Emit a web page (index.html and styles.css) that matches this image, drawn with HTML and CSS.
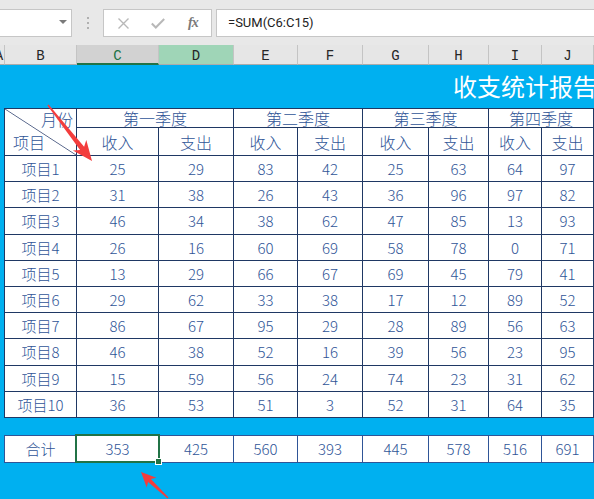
FILE: index.html
```html
<!DOCTYPE html>
<html lang="zh">
<head>
<meta charset="utf-8">
<title>收支统计报告</title>
<link rel="stylesheet" href="styles.css">
</head>
<body>
<div class="app">
  <div class="toolbar">
    <div class="namebox"><span class="caret"></span></div>
    <div class="grip"><i></i><i></i><i></i></div>
    <div class="fxbox">
      <svg class="ic-x" width="11" height="11" viewBox="0 0 11 11"><path d="M0.5 0.5 L10.5 10.5 M10.5 0.5 L0.5 10.5" stroke="#b8b8b8" stroke-width="1.4" fill="none"/></svg>
      <svg class="ic-ok" width="14" height="11" viewBox="0 0 14 11"><path d="M0.8 5.5 L4.8 9.5 L13.2 1" stroke="#b8b8b8" stroke-width="2" fill="none"/></svg>
      <span class="ic-fx">fx</span>
    </div>
    <div class="formula">=SUM(C6:C15)</div>
  </div>
  <div class="colheads">
    <div class="ch cha"><span>A</span></div>
    <div class="ch">B</div>
    <div class="ch chsel">C</div>
    <div class="ch chhi">D</div>
    <div class="ch">E</div>
    <div class="ch">F</div>
    <div class="ch">G</div>
    <div class="ch">H</div>
    <div class="ch">I</div>
    <div class="ch">J</div>
  </div>
  <div class="sheet">
    <div class="title">收支统计报告</div>
    <div class="grid main">
      <div class="cell corner"><span class="yf">月份</span><span class="xm">项目</span></div>
      <div class="cell hd q">第一季度</div>
      <div class="cell hd q">第二季度</div>
      <div class="cell hd q">第三季度</div>
      <div class="cell hd q">第四季度</div>
      <div class="cell hd">收入</div><div class="cell hd">支出</div>
      <div class="cell hd">收入</div><div class="cell hd">支出</div>
      <div class="cell hd">收入</div><div class="cell hd">支出</div>
      <div class="cell hd">收入</div><div class="cell hd">支出</div>

      <div class="cell">项目1</div><div class="cell">25</div><div class="cell">29</div><div class="cell">83</div><div class="cell">42</div><div class="cell">25</div><div class="cell">63</div><div class="cell">64</div><div class="cell">97</div>
      <div class="cell">项目2</div><div class="cell">31</div><div class="cell">38</div><div class="cell">26</div><div class="cell">43</div><div class="cell">36</div><div class="cell">96</div><div class="cell">97</div><div class="cell">82</div>
      <div class="cell">项目3</div><div class="cell">46</div><div class="cell">34</div><div class="cell">38</div><div class="cell">62</div><div class="cell">47</div><div class="cell">85</div><div class="cell">13</div><div class="cell">93</div>
      <div class="cell">项目4</div><div class="cell">26</div><div class="cell">16</div><div class="cell">60</div><div class="cell">69</div><div class="cell">58</div><div class="cell">78</div><div class="cell">0</div><div class="cell">71</div>
      <div class="cell">项目5</div><div class="cell">13</div><div class="cell">29</div><div class="cell">66</div><div class="cell">67</div><div class="cell">69</div><div class="cell">45</div><div class="cell">79</div><div class="cell">41</div>
      <div class="cell">项目6</div><div class="cell">29</div><div class="cell">62</div><div class="cell">33</div><div class="cell">38</div><div class="cell">17</div><div class="cell">12</div><div class="cell">89</div><div class="cell">52</div>
      <div class="cell">项目7</div><div class="cell">86</div><div class="cell">67</div><div class="cell">95</div><div class="cell">29</div><div class="cell">28</div><div class="cell">89</div><div class="cell">56</div><div class="cell">63</div>
      <div class="cell">项目8</div><div class="cell">46</div><div class="cell">38</div><div class="cell">52</div><div class="cell">16</div><div class="cell">39</div><div class="cell">56</div><div class="cell">23</div><div class="cell">95</div>
      <div class="cell">项目9</div><div class="cell">15</div><div class="cell">59</div><div class="cell">56</div><div class="cell">24</div><div class="cell">74</div><div class="cell">23</div><div class="cell">31</div><div class="cell">62</div>
      <div class="cell">项目10</div><div class="cell">36</div><div class="cell">53</div><div class="cell">51</div><div class="cell">3</div><div class="cell">52</div><div class="cell">31</div><div class="cell">64</div><div class="cell">35</div>
    </div>
    <div class="grid total">
      <div class="cell">合计</div>
      <div class="cell active">353<span class="sel"></span><span class="handle"></span></div>
      <div class="cell">425</div><div class="cell">560</div><div class="cell">393</div><div class="cell">445</div><div class="cell">578</div><div class="cell">516</div><div class="cell">691</div>
    </div>
  </div>
  <svg class="arrows" width="594" height="499" viewBox="0 0 594 499">
    <polygon fill="#f33d3d" points="47.4,105.5 80.1,150.0 72.9,150.6 92,161 86.3,140.0 84.1,146.8 48.6,104.5"/>
    <polygon fill="#f33d3d" points="168.5,497.5 150.9,479.1 156.5,477.7 141,472 146.7,487.5 148.1,481.9 167.5,498.5"/>
  </svg>
</div>
</body>
</html>
```
FILE: styles.css
```css
* { box-sizing: border-box; }

body {
  margin: 0;
  width: 594px;
  height: 499px;
  overflow: hidden;
  background: #00b0f0;
  font-family: "Noto Sans CJK SC", sans-serif;
}

.app {
  position: relative;
  width: 594px;
  height: 499px;
  overflow: hidden;
}

/* formula toolbar */
.toolbar {
  height: 45px;
  background: #e8e8e8;
  display: flex;
  align-items: flex-start;
  padding-top: 9px;
}

.namebox {
  position: relative;
  width: 73px;
  height: 28px;
  margin-left: -1px;
  background: #fff;
  border: 1px solid #c6c6c6;
}

.caret {
  position: absolute;
  left: 59px;
  top: 10px;
  width: 0;
  height: 0;
  border-left: 4px solid transparent;
  border-right: 4px solid transparent;
  border-top: 4px solid #7a7a7a;
}

.grip {
  width: 31px;
  display: flex;
  flex-direction: column;
  align-items: center;
  gap: 3px;
  padding-top: 8px;
}

.grip i {
  display: block;
  width: 2px;
  height: 2px;
  background: #b0b0b0;
}

.fxbox {
  width: 109px;
  height: 28px;
  background: #fff;
  border: 1px solid #c6c6c6;
  display: flex;
  align-items: center;
}

.ic-x { margin-left: 14px; }
.ic-ok { margin-left: 22px; }

.ic-fx {
  margin-left: 23px;
  font-family: "Liberation Serif", serif;
  font-style: italic;
  font-weight: bold;
  font-size: 14px;
  color: #7a7a7a;
  letter-spacing: -1px;
}

.formula {
  flex: 1;
  height: 28px;
  margin-left: 4px;
  margin-right: -2px;
  background: #fff;
  border: 1px solid #c6c6c6;
  padding-left: 11px;
  font-family: Roboto, "Liberation Sans", sans-serif;
  font-size: 13px;
  line-height: 25px;
  color: #222;
}

/* column headers */
.colheads {
  display: grid;
  grid-template-columns: 5px 72px 82px 75px 64px 65px 66px 60px 53px 52px;
  height: 20px;
  background: #e6e6e6;
}

.ch {
  border-right: 1px solid #c4c4c4;
  border-bottom: 1px solid #ababab;
  text-align: center;
  font-family: "Liberation Mono", monospace;
  font-size: 14px;
  line-height: 22px;
  color: #262626;
  overflow: hidden;
  white-space: nowrap;
}

.cha span {
  display: inline-block;
  margin-left: -6px;
}

.chsel {
  background: #d2d2d2;
  color: #217346;
  border-bottom: 2px solid #217346;
}

.chhi {
  background: #9fd5b7;
}

/* sheet */
.sheet {
  height: 434px;
  background: #00b0f0;
}

.title {
  height: 43px;
  padding-left: 453px;
  color: #fff;
  font-size: 24px;
  font-weight: 400;
  line-height: 42px;
  white-space: nowrap;
  overflow: hidden;
}

.grid {
  width: 590px;
  margin-left: 4px;
  display: grid;
  grid-template-columns: 71px 81px 74px 63px 64px 65px 59px 52px 51px;
  gap: 1px;
  padding: 1px;
  background: #1f3864;
}

.main {
  grid-template-rows: 18px 27px repeat(10, 25.2px);
}

.total {
  margin-top: 17px;
  grid-template-rows: 26px;
  background: #2f5597;
}

.cell {
  background: #fff;
  color: #2f5597;
  display: flex;
  align-items: center;
  justify-content: center;
  font-size: 15px;
  font-weight: 300;
  line-height: 1;
  white-space: nowrap;
}

.hd { font-size: 16px; }

.q { grid-column: span 2; }

.corner {
  grid-row: 1 / 3;
  flex-direction: column;
  align-items: stretch;
  justify-content: space-between;
  padding: 2px 3px 5px 8px;
  font-size: 16px;
  background: #fff linear-gradient(to top right, transparent calc(50% - 0.8px), #56658a 50%, transparent calc(50% + 0.8px));
}

.yf { align-self: flex-end; }
.xm { align-self: flex-start; }

.active { position: relative; }

.sel {
  position: absolute;
  top: -2px;
  left: -2px;
  right: -2px;
  bottom: -1px;
  border: 2px solid #217346;
  z-index: 1;
}

.handle {
  position: absolute;
  right: -4px;
  bottom: -3px;
  width: 7px;
  height: 7px;
  background: #217346;
  border: 1px solid #fff;
  z-index: 2;
}

.arrows {
  position: absolute;
  left: 0;
  top: 0;
  pointer-events: none;
}
```
